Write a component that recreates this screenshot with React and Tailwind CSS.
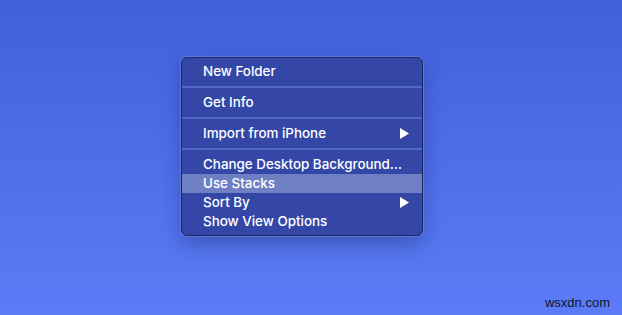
import React from 'react';

const Arrow = () => (
  <svg width="9" height="11" viewBox="0 0 9 11" className="shrink-0">
    <path d="M0 0 L9 5.5 L0 11 Z" fill="white" />
  </svg>
);

const Item = ({ label, sub, active }) => (
  <div
    className={`flex h-[19px] items-center justify-between pl-[21px] pr-[13px] text-[13.4px] font-medium leading-none text-white ${
      active ? 'bg-[#6f7fc4]' : ''
    }`}
  >
    <span>{label}</span>
    {sub && <Arrow />}
  </div>
);

const Separator = () => (
  <div className="flex h-[12px] items-center">
    <div className="h-[2px] w-full bg-[#5468c8]" />
  </div>
);

const App = () => {
  return (
    <div
      className="relative flex h-[315px] w-[622px] justify-center overflow-hidden bg-gradient-to-b from-[#4060da] to-[#5b7cf6] pt-[57px]"
      style={{ fontFamily: 'Inter, "Liberation Sans", sans-serif' }}
    >
      <div className="h-fit w-[242px] -translate-x-[9px] rounded-[6px] border border-[#1d275e] bg-[#3447a7] py-[4px] shadow-[0_0_0_1px_rgba(120,140,230,0.5),0_8px_20px_rgba(20,30,90,0.35)]">
        <Item label="New Folder" />
        <Separator />
        <Item label="Get Info" />
        <Separator />
        <Item label="Import from iPhone" sub />
        <Separator />
        <Item label="Change Desktop Background…" />
        <Item label="Use Stacks" active />
        <Item label="Sort By" sub />
        <Item label="Show View Options" />
      </div>
      <div
        className="absolute bottom-[3px] right-[12px] text-[13px] text-[#10142a]"
        style={{ fontFamily: '"Liberation Sans", sans-serif' }}
      >
        wsxdn.com
      </div>
    </div>
  );
};

export default App;
